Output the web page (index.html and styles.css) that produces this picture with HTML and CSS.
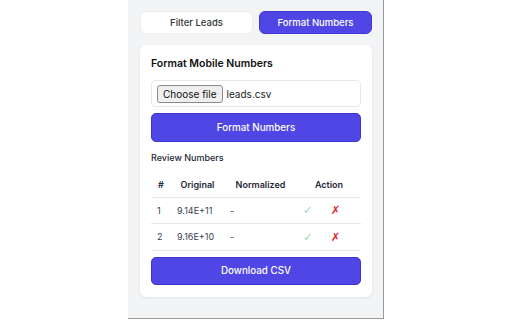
FILE: index.html
```html
<!DOCTYPE html>
<html>
<head>
<meta charset="utf-8">
<link rel="stylesheet" href="styles.css">
</head>
<body>
<div class="panel">
  <div class="tabs">
    <button class="tab">Filter Leads</button>
    <button class="tab tab-active">Format Numbers</button>
  </div>
  <div class="card">
    <h2 class="card-title">Format Mobile Numbers</h2>
    <div class="file-box">
      <span class="file-btn">Choose file</span>
      <span class="file-name">leads.csv</span>
    </div>
    <button class="primary-btn">Format Numbers</button>
    <div class="section-label">Review Numbers</div>
    <table class="review-table">
      <colgroup>
        <col class="col-idx">
        <col class="col-orig">
        <col class="col-norm">
        <col class="col-act">
      </colgroup>
      <thead>
        <tr><th>#</th><th>Original</th><th>Normalized</th><th>Action</th></tr>
      </thead>
      <tbody>
        <tr>
          <td>1</td><td>9.14E+11</td><td>-</td>
          <td><div class="actions"><span class="ok">✓</span><span class="no">✗</span></div></td>
        </tr>
        <tr>
          <td>2</td><td>9.16E+10</td><td>-</td>
          <td><div class="actions"><span class="ok">✓</span><span class="no">✗</span></div></td>
        </tr>
      </tbody>
    </table>
    <button class="primary-btn download-btn">Download CSV</button>
  </div>
</div>
</body>
</html>
```
FILE: styles.css
```css
* { box-sizing: border-box; }
html, body { margin: 0; padding: 0; background: #ffffff; }
body {
  display: flex;
  justify-content: center;
  font-family: Inter, "Noto Sans", sans-serif;
  color: #1f2937;
}
.panel {
  width: 256px;
  height: 319px;
  background: #f3f4f6;
  border-right: 1px solid #9a9a9a;
  border-bottom: 1px solid #9a9a9a;
  padding: 11px 11px 0 12px;
  display: flex;
  flex-direction: column;
  gap: 11px;
}
.tabs {
  display: grid;
  grid-template-columns: 1fr 1fr;
  gap: 6px;
}
.tab {
  height: 23px;
  border: 1px solid #ededed;
  border-radius: 6px;
  background: #ffffff;
  font-family: inherit;
  font-size: 9.5px;
  font-weight: 500;
  color: #333;
  padding: 0;
}
.tab-active {
  background: #4f46e5;
  border-color: #3f37d6;
  color: #ffffff;
}
.card {
  background: #ffffff;
  border-radius: 7px;
  box-shadow: 0 1px 3px rgba(0,0,0,0.07);
  padding: 12px 11px 12px 11px;
  display: flex;
  flex-direction: column;
}
.card-title {
  margin: 0;
  font-size: 10.5px;
  line-height: 14px;
  font-weight: 600;
  color: #111;
}
.file-box {
  margin-top: 9px;
  height: 27px;
  border: 1px solid #e7e8eb;
  border-radius: 4px;
  display: flex;
  align-items: center;
  padding: 0 5px;
  gap: 4px;
  font-size: 10px;
}
.file-btn {
  height: 18px;
  padding: 0 5px;
  display: flex;
  align-items: center;
  background: #efefef;
  border: 1px solid #8a8a8a;
  border-radius: 3px;
  color: #111;
}
.file-name { color: #222; }
.primary-btn {
  height: 29px;
  margin-top: 6px;
  border: 1px solid #3b34cf;
  border-radius: 5px;
  background: #4f46e5;
  color: #ffffff;
  font-family: inherit;
  font-size: 9.8px;
  font-weight: 500;
  padding: 0;
}
.section-label {
  margin-top: 10px;
  font-size: 9px;
  line-height: 12px;
  font-weight: 500;
  color: #1f2937;
}
.review-table {
  margin-top: 8px;
  width: 100%;
  border-collapse: collapse;
  table-layout: fixed;
  font-size: 9px;
}
.col-idx { width: 20px; }
.col-orig { width: 53px; }
.col-norm { width: 73px; }
.review-table th {
  height: 25px;
  padding: 0 6px;
  font-weight: 600;
  color: #1f2937;
  text-align: center;
  border-bottom: 1px solid #e8e9ec;
}
.review-table td {
  height: 26.5px;
  padding: 0 6px;
  color: #374151;
  text-align: left;
  border-bottom: 1px solid #e8e9ec;
}
.actions {
  display: flex;
  gap: 18px;
  font-family: "DejaVu Sans", sans-serif;
  font-size: 11.5px;
}
.ok { color: #9fd9b4; }
.no { color: #e0282b; }
.download-btn {
  height: 28px;
  margin-top: 6px;
}
```
